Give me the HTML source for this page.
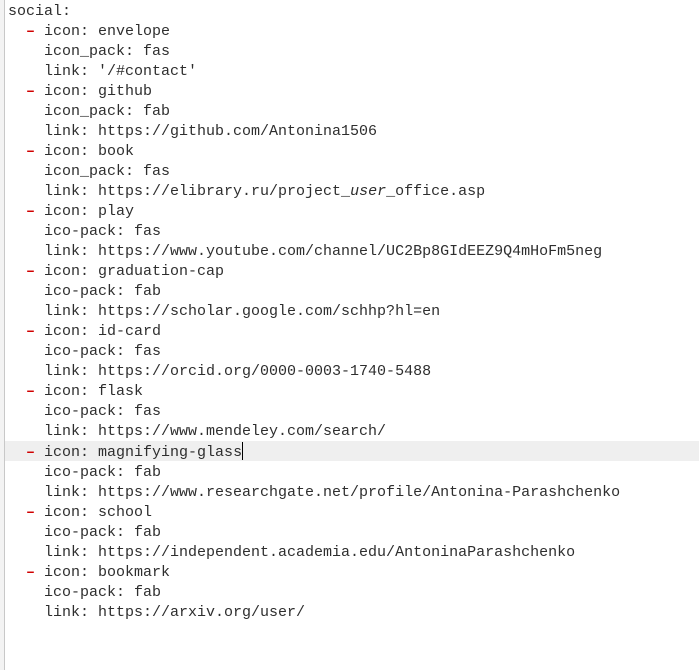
<!DOCTYPE html>
<html><head><meta charset="utf-8"><style>
html,body{margin:0;padding:0;width:699px;height:670px;overflow:hidden;background:#fff}
.g{position:absolute;left:0;top:0;width:4px;height:670px;background:#f3f3f3;border-right:1px solid #c8c8c8}
.hl{position:absolute;left:5px;top:441px;width:694px;height:20px;background:#efefef}
pre{position:absolute;left:8px;top:2px;margin:0;font-family:"Liberation Mono",monospace;font-size:15px;line-height:20px;color:#2e2e2e}
.d{color:#d00000;font-weight:bold}
.c{display:inline-block;width:1px;height:18px;background:#000;vertical-align:-4px}
</style></head><body>
<div class="g"></div><div class="hl"></div>
<pre>social:
  <span class="d">–</span> icon: envelope
    icon_pack: fas
    link: '/#contact'
  <span class="d">–</span> icon: github
    icon_pack: fab
    link: https://github.com/Antonina1506
  <span class="d">–</span> icon: book
    icon_pack: fas
    link: https://elibrary.ru/project_<i>user</i>_office.asp
  <span class="d">–</span> icon: play
    ico-pack: fas
    link: https://www.youtube.com/channel/UC2Bp8GIdEEZ9Q4mHoFm5neg
  <span class="d">–</span> icon: graduation-cap
    ico-pack: fab
    link: https://scholar.google.com/schhp?hl=en
  <span class="d">–</span> icon: id-card
    ico-pack: fas
    link: https://orcid.org/0000-0003-1740-5488
  <span class="d">–</span> icon: flask
    ico-pack: fas
    link: https://www.mendeley.com/search/
  <span class="d">–</span> icon: magnifying-glass<span class="c"></span>
    ico-pack: fab
    link: https://www.researchgate.net/profile/Antonina-Parashchenko
  <span class="d">–</span> icon: school
    ico-pack: fab
    link: https://independent.academia.edu/AntoninaParashchenko
  <span class="d">–</span> icon: bookmark
    ico-pack: fab
    link: https://arxiv.org/user/
</pre>
</body></html>
